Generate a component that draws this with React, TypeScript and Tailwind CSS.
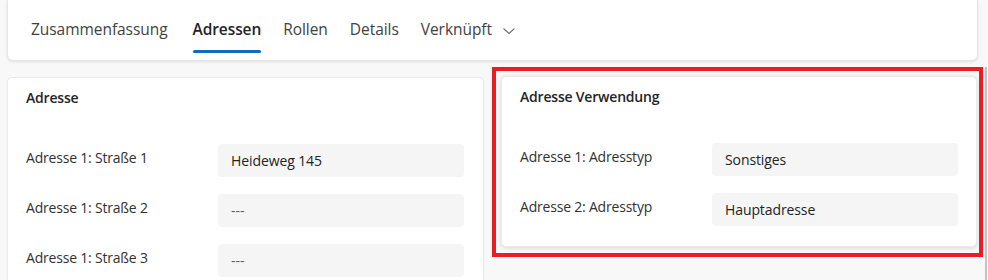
import React from "react";

const font = { fontFamily: '"Open Sans", "Noto Sans", sans-serif' };

function Tab({ label, active }: { label: string; active?: boolean }) {
  return (
    <div className="relative flex h-full flex-col items-center justify-center">
      <span
        className={
          active
            ? "text-[15.5px] font-semibold text-[#242424] tracking-[-0.1px]"
            : "text-[15.5px] text-[#424242] tracking-[-0.05px]"
        }
      >
        {label}
      </span>
      {active && <div className="absolute bottom-[7px] left-0 right-0 h-[3px] rounded-full bg-[#0f6cbd]" />}
    </div>
  );
}

function Row({ label, value, empty }: { label: string; value: string; empty?: boolean }) {
  return (
    <div className="flex items-start">
      <div className="w-[192px] shrink-0 pt-[4px] text-[14px] leading-[20px] text-[#323130] tracking-[-0.2px]">{label}</div>
      <div className="flex h-[33px] flex-1 items-center rounded-[4px] bg-[#f5f5f5] px-[13px]">
        <span className={empty ? "text-[14px] text-[#616161]" : "text-[14px] text-[#242424] tracking-[-0.1px]"}>{value}</span>
      </div>
    </div>
  );
}

export default function App() {
  return (
    <div className="flex h-[280px] w-[988px] overflow-hidden bg-[#f8f8f8]" style={font}>
      <div className="w-[978px] shrink-0 pl-[7px]">
        <div className="flex h-[61px] items-center gap-[22px] rounded-b-[6px] border-x border-b border-[#e6e6e6] bg-white pl-[23px] shadow-[0_1px_3px_rgba(0,0,0,0.10)]">
          <Tab label="Zusammenfassung" />
          <div className="ml-[3px] h-full">
            <Tab label="Adressen" active />
          </div>
          <Tab label="Rollen" />
          <Tab label="Details" />
          <div className="flex h-full items-center gap-[10px]">
            <Tab label="Verknüpft" />
            <svg width="14" height="14" viewBox="0 0 14 14" className="mt-[2px]">
              <polyline points="1.5,4.5 7,9.5 12.5,4.5" fill="none" stroke="#707070" strokeWidth="1.1" />
            </svg>
          </div>
        </div>
        <div className="flex items-start gap-[8px]">
          <div className="mt-[16px] h-[240px] w-[477px] shrink-0 rounded-[5px] border border-[#ebebeb] bg-white px-[18px] pt-[10px] shadow-[0_1px_2px_rgba(0,0,0,0.06)]">
            <div className="text-[14px] font-semibold leading-[20px] text-[#242424] tracking-[-0.2px]">Adresse</div>
            <div className="mt-[36px] flex flex-col gap-[17px] pr-[1px]">
              <Row label="Adresse 1: Straße 1" value="Heideweg 145" />
              <Row label="Adresse 1: Straße 2" value="---" empty />
              <Row label="Adresse 1: Straße 3" value="---" empty />
            </div>
          </div>
          <div className="mt-[6px] w-[491px] shrink-0 border-4 border-[#ec1c24] pb-[6px] pl-[5px] pr-[2px] pt-[5px]">
            <div className="h-[171px] rounded-[5px] border border-[#ebebeb] bg-white px-[18px] pt-[10px] shadow-[0_1px_4px_rgba(0,0,0,0.14)]">
              <div className="text-[14px] font-semibold leading-[20px] text-[#242424] tracking-[-0.2px]">Adresse Verwendung</div>
              <div className="mt-[36px] flex flex-col gap-[17px]">
                <Row label="Adresse 1: Adresstyp" value="Sonstiges" />
                <Row label="Adresse 2: Adresstyp" value="Hauptadresse" />
              </div>
            </div>
          </div>
        </div>
      </div>
      <div className="ml-[7px] mt-[67px] h-[213px] w-[2px] bg-[#c4c4c4]" />
    </div>
  );
}
